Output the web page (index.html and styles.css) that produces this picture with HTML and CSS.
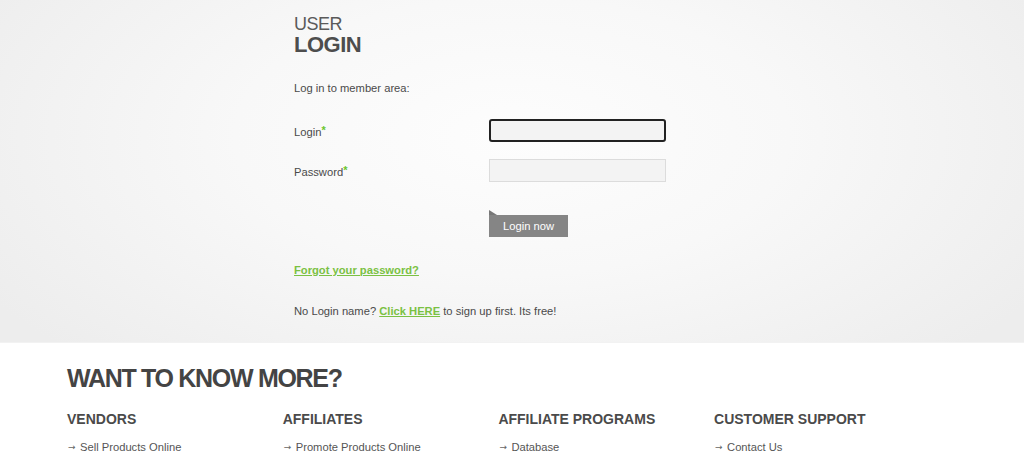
FILE: index.html
```html
<!DOCTYPE html>
<html lang="en">

<head>
    <meta charset="UTF-8">
    <meta name="viewport" content="width=device-width, initial-scale=1.0">
    <title>User Login</title>
    <link rel="stylesheet" href="styles.css">
</head>

<body>

    <div class="login-area">
        <div class="container">
            <h1 class="page-title"><span class="light">USER</span><span class="bold">LOGIN</span></h1>
            <p class="intro">Log in to member area:</p>
            <form id="login-form">
                <div class="form-row">
                    <label for="login">Login<span class="req">*</span></label>
                    <input type="text" id="login" class="focused" autofocus>
                </div>
                <div class="form-row">
                    <label for="password">Password<span class="req">*</span></label>
                    <input type="password" id="password">
                </div>
                <div class="form-row button-row">
                    <button type="submit" class="btn-login">Login now</button>
                </div>
            </form>
            <p class="forgot"><a href="#">Forgot your password?</a></p>
            <p class="signup">No Login name? <a href="#">Click HERE</a> to sign up first. Its free!</p>
        </div>
    </div>

    <div class="more">
        <div class="more-inner">
            <h2>WANT TO KNOW MORE?</h2>
            <div class="more-cols">
                <div class="col">
                    <h3>VENDORS</h3>
                    <ul>
                        <li><a href="#">Sell Products Online</a></li>
                    </ul>
                </div>
                <div class="col">
                    <h3>AFFILIATES</h3>
                    <ul>
                        <li><a href="#">Promote Products Online</a></li>
                    </ul>
                </div>
                <div class="col">
                    <h3>AFFILIATE PROGRAMS</h3>
                    <ul>
                        <li><a href="#">Database</a></li>
                    </ul>
                </div>
                <div class="col">
                    <h3>CUSTOMER SUPPORT</h3>
                    <ul>
                        <li><a href="#">Contact Us</a></li>
                    </ul>
                </div>
            </div>
        </div>
    </div>

</body>

</html>
```

FILE: styles.css
```css
body {
    font-family: "Liberation Sans", Arial, sans-serif;
    color: #4a4a4a;
    background-color: #fff;
    margin: 0;
    padding: 0;
}

.login-area {
    height: 342px;
    background: radial-gradient(ellipse 60% 90% at 50% 40%, #fdfdfd 0%, #f8f8f8 45%, #ededed 100%);
    border-bottom: 1px solid #f2f2f2;
    overflow: hidden;
}

.container {
    width: 436px;
    margin: 0 auto;
    padding-top: 15px;
}

.page-title {
    margin: 0;
    line-height: 1;
    color: #4d4d4d;
}

.page-title .light {
    display: block;
    font-size: 18px;
    font-weight: normal;
    letter-spacing: -0.5px;
    color: #5a5a5a;
}

.page-title .bold {
    display: block;
    font-size: 22px;
    font-weight: bold;
    letter-spacing: -0.5px;
    margin-top: 1px;
}

.intro {
    font-size: 11.2px;
    margin: 26px 0 0;
}

#login-form {
    margin-top: 25px;
}

.form-row {
    display: flex;
    align-items: center;
    margin-bottom: 17px;
}

.form-row label {
    width: 195px;
    font-size: 11.2px;
}

.req {
    color: #6cc62d;
    font-weight: bold;
    vertical-align: 2px;
    font-size: 11px;
}

.form-row input {
    width: 177px;
    height: 23px;
    box-sizing: border-box;
    background-color: #f3f3f3;
    border: 1px solid #dcdcdc;
    border-radius: 0;
    padding: 0 4px;
    font-size: 12px;
}

.form-row input.focused {
    border: 2px solid #222;
    border-radius: 3px;
    outline: none;
}

.form-row input:focus {
    outline: none;
}

.button-row {
    margin-top: 33px;
    padding-left: 195px;
}

.btn-login {
    position: relative;
    height: 22px;
    padding: 0 14px;
    background-color: #858585;
    color: #fff;
    border: none;
    font-family: "Liberation Sans", Arial, sans-serif;
    font-size: 11.2px;
    cursor: pointer;
}

.btn-login::before {
    content: "";
    position: absolute;
    left: 0;
    top: -5px;
    border-left: 8px solid #777;
    border-top: 5px solid transparent;
}

.btn-login:hover {
    background-color: #707070;
}

.forgot {
    margin: 27px 0 0;
    font-size: 11.2px;
}

.forgot a,
.signup a {
    color: #7ac143;
    font-weight: bold;
}

.signup {
    margin: 29px 0 0;
    font-size: 11.2px;
}

.more-inner {
    width: 890px;
    margin: 0 auto;
    padding-top: 21px;
}

.more h2 {
    margin: 0;
    font-size: 25px;
    font-weight: bold;
    letter-spacing: -1.3px;
    color: #444;
}

.more-cols {
    display: grid;
    grid-template-columns: repeat(4, 215.7px);
    margin-top: 18px;
}

.col h3 {
    margin: 0;
    font-size: 14px;
    font-weight: bold;
    color: #4a4a4a;
}

.col ul {
    list-style: none;
    margin: 14px 0 0;
    padding: 0;
}

.col li {
    font-size: 11.2px;
}

.col li::before {
    content: "\2192";
    display: inline-block;
    font-family: "DejaVu Sans", sans-serif;
    font-size: 9px;
    width: 12px;
    margin-left: 1px;
    vertical-align: 1px;
    color: #666;
}

.col li a {
    color: #555;
    text-decoration: none;
}
```
